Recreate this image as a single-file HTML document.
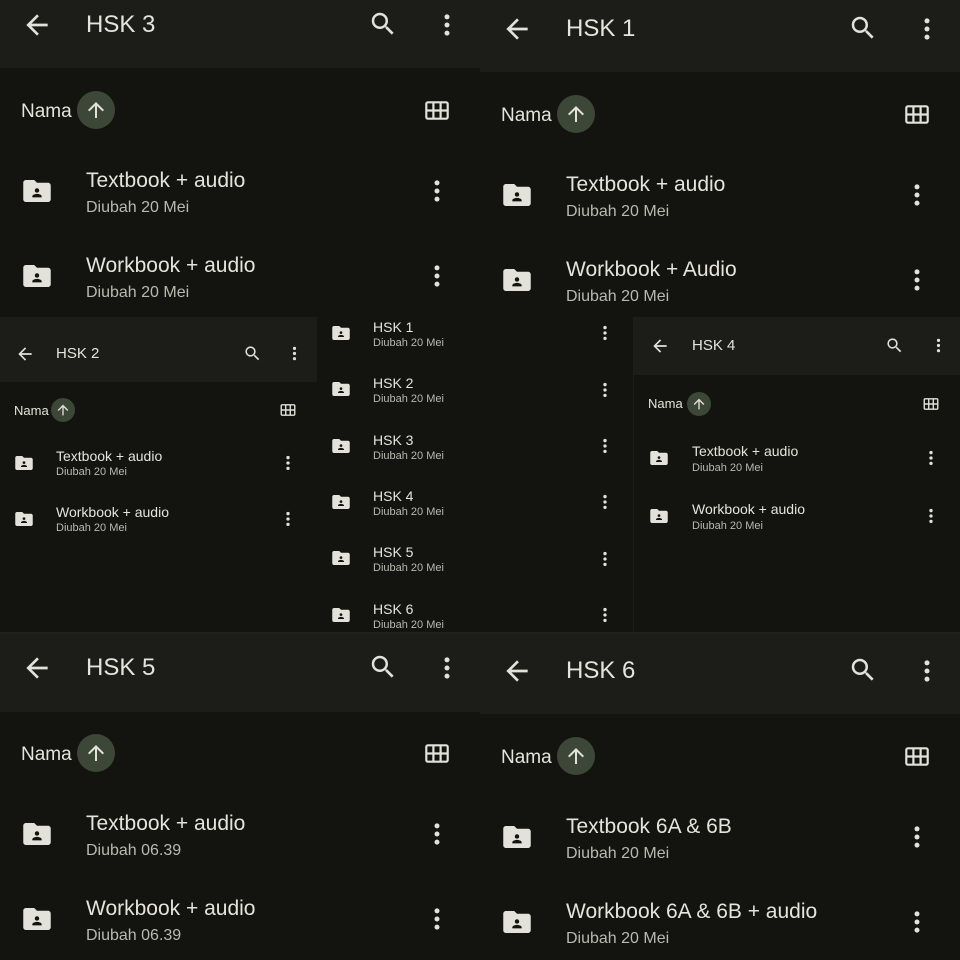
<!DOCTYPE html>
<html><head><meta charset="utf-8">
<style>
*{margin:0;padding:0;box-sizing:border-box}
body{width:960px;height:960px;background:#131410;position:relative;overflow:hidden;font-family:"Liberation Sans",sans-serif;color:#e4e4dc}
.c{position:absolute;overflow:hidden;background:#131410}
.h{position:absolute;left:0;background:#1c1d19}
.t{position:absolute;white-space:nowrap;line-height:1.2}
.s{color:#b9b9b1}
svg.i{position:absolute;fill:#e2e2da}
.o{position:absolute;border-radius:50%;background:#3d4737}
</style></head><body>
<svg width="0" height="0" style="position:absolute">
<defs>
<symbol id="back" viewBox="0 0 24 24"><path d="M20 11H7.83l5.59-5.59L12 4l-8 8 8 8 1.41-1.41L7.83 13H20v-2z"/></symbol>
<symbol id="search" viewBox="0 0 24 24"><path d="M15.5 14h-.79l-.28-.27A6.471 6.471 0 0016 9.5 6.5 6.5 0 109.5 16c1.61 0 3.09-.59 4.23-1.57l.27.28v.79l5 4.99L20.49 19l-4.99-5zm-6 0C7.01 14 5 11.99 5 9.5S7.01 5 9.5 5 14 7.01 14 9.5 11.99 14 9.5 14z"/></symbol>
<symbol id="more" viewBox="0 0 24 24"><circle cx="12" cy="5.5" r="2"/><circle cx="12" cy="12" r="2"/><circle cx="12" cy="18.5" r="2"/></symbol>
<symbol id="up" viewBox="0 0 24 24"><path d="M4 12l1.41 1.41L11 7.83V20h2V7.83l5.58 5.59L20 12l-8-8-8 8z"/></symbol>
<symbol id="folder" viewBox="2 4 20 16"><path d="M20 6h-8l-2-2H4c-1.1 0-2 .9-2 2v12c0 1.1.9 2 2 2h16c1.1 0 2-.9 2-2V8c0-1.1-.9-2-2-2zm-8 4c.9 0 1.6.7 1.6 1.6s-.7 1.6-1.6 1.6-1.6-.7-1.6-1.6.7-1.6 1.6-1.6zm3.4 6.6H8.6v-.8c0-1.1 2.3-1.7 3.4-1.7s3.4.6 3.4 1.7v.8z"/></symbol>
<symbol id="grid" viewBox="0 0 24 19"><g fill="none" stroke="#e2e2da" stroke-width="2.2"><rect x="1.3" y="1.3" width="21.4" height="16.4" rx="1.6"/><path d="M8.4 1.3v16.4M15.6 1.3v16.4M1.3 9.5h21.4"/></g></symbol>
</defs></svg>

<!-- TOP LEFT HSK 3 -->
<div class="c" style="left:0;top:0;width:480px;height:316px">
<div class="h" style="top:0;width:480px;height:68px"></div>
<svg class="i" style="left:21px;top:9px;width:32px;height:32px"><use href="#back"/></svg>
<div class="t" style="left:86px;top:11px;font-size:24px">HSK 3</div>
<svg class="i" style="left:368px;top:9px;width:30px;height:30px"><use href="#search"/></svg>
<svg class="i" style="left:432px;top:10px;width:30px;height:30px"><use href="#more"/></svg>
<div class="t" style="left:21px;top:101px;font-size:19px">Nama</div>
<div class="o" style="left:77px;top:91px;width:38px;height:38px"></div>
<svg class="i" style="left:84px;top:98px;width:24px;height:24px"><use href="#up"/></svg>
<svg class="i" style="left:425px;top:101px;width:24px;height:19px"><use href="#grid"/></svg>
<svg class="i" style="left:23px;top:180px;width:28px;height:22px"><use href="#folder"/></svg>
<div class="t" style="left:86px;top:168px;font-size:21px">Textbook + audio</div>
<div class="t s" style="left:86px;top:198px;font-size:16px">Diubah 20 Mei</div>
<svg class="i" style="left:422px;top:176px;width:30px;height:30px"><use href="#more"/></svg>
<svg class="i" style="left:23px;top:265px;width:28px;height:22px"><use href="#folder"/></svg>
<div class="t" style="left:86px;top:253px;font-size:21px">Workbook + audio</div>
<div class="t s" style="left:86px;top:283px;font-size:16px">Diubah 20 Mei</div>
<svg class="i" style="left:422px;top:261px;width:30px;height:30px"><use href="#more"/></svg>
</div>

<!-- TOP RIGHT HSK 1 -->
<div class="c" style="left:480px;top:0;width:480px;height:317px">
<div class="h" style="top:0;width:480px;height:72px"></div>
<div style="position:absolute;left:0;top:4px;width:480px;height:313px">
<svg class="i" style="left:21px;top:9px;width:32px;height:32px"><use href="#back"/></svg>
<div class="t" style="left:86px;top:11px;font-size:24px">HSK 1</div>
<svg class="i" style="left:368px;top:9px;width:30px;height:30px"><use href="#search"/></svg>
<svg class="i" style="left:432px;top:10px;width:30px;height:30px"><use href="#more"/></svg>
<div class="t" style="left:21px;top:101px;font-size:19px">Nama</div>
<div class="o" style="left:77px;top:91px;width:38px;height:38px"></div>
<svg class="i" style="left:84px;top:98px;width:24px;height:24px"><use href="#up"/></svg>
<svg class="i" style="left:425px;top:101px;width:24px;height:19px"><use href="#grid"/></svg>
<svg class="i" style="left:23px;top:180px;width:28px;height:22px"><use href="#folder"/></svg>
<div class="t" style="left:86px;top:168px;font-size:21px">Textbook + audio</div>
<div class="t s" style="left:86px;top:198px;font-size:16px">Diubah 20 Mei</div>
<svg class="i" style="left:422px;top:176px;width:30px;height:30px"><use href="#more"/></svg>
<svg class="i" style="left:23px;top:265px;width:28px;height:22px"><use href="#folder"/></svg>
<div class="t" style="left:86px;top:253px;font-size:21px">Workbook + Audio</div>
<div class="t s" style="left:86px;top:283px;font-size:16px">Diubah 20 Mei</div>
<svg class="i" style="left:422px;top:261px;width:30px;height:30px"><use href="#more"/></svg>
</div>
</div>

<!-- MID LEFT HSK 2 -->
<div class="c" style="left:0;top:317px;width:317px;height:315px">
<div class="h" style="top:0;width:317px;height:65px"></div>
<svg class="i" style="left:15px;top:27px;width:20px;height:20px"><use href="#back"/></svg>
<div class="t" style="left:56px;top:28px;font-size:15px">HSK 2</div>
<svg class="i" style="left:243px;top:27px;width:19px;height:19px"><use href="#search"/></svg>
<svg class="i" style="left:285px;top:27px;width:19px;height:19px"><use href="#more"/></svg>
<div class="t" style="left:14px;top:86px;font-size:13px">Nama</div>
<div class="o" style="left:51px;top:81px;width:24px;height:24px"></div>
<svg class="i" style="left:55px;top:85px;width:16px;height:16px"><use href="#up"/></svg>
<svg class="i" style="left:280px;top:87px;width:16px;height:12px"><use href="#grid"/></svg>
<svg class="i" style="left:15px;top:139px;width:18px;height:14px"><use href="#folder"/></svg>
<div class="t" style="left:56px;top:131px;font-size:14px">Textbook + audio</div>
<div class="t s" style="left:56px;top:149px;font-size:11px">Diubah 20 Mei</div>
<svg class="i" style="left:278px;top:136px;width:20px;height:20px"><use href="#more"/></svg>
<svg class="i" style="left:15px;top:195px;width:18px;height:14px"><use href="#folder"/></svg>
<div class="t" style="left:56px;top:187px;font-size:14px">Workbook + audio</div>
<div class="t s" style="left:56px;top:205px;font-size:11px">Diubah 20 Mei</div>
<svg class="i" style="left:278px;top:192px;width:20px;height:20px"><use href="#more"/></svg>
</div>

<!-- MID LIST -->
<div class="c" style="left:317px;top:317px;width:316px;height:315px">
<svg class="i" style="left:15px;top:9px;width:18px;height:14px"><use href="#folder"/></svg>
<div class="t" style="left:56px;top:2px;font-size:14px">HSK 1</div>
<div class="t s" style="left:56px;top:20px;font-size:11px">Diubah 20 Mei</div>
<svg class="i" style="left:278px;top:6px;width:20px;height:20px"><use href="#more"/></svg>
<svg class="i" style="left:15px;top:65px;width:18px;height:14px"><use href="#folder"/></svg>
<div class="t" style="left:56px;top:58px;font-size:14px">HSK 2</div>
<div class="t s" style="left:56px;top:76px;font-size:11px">Diubah 20 Mei</div>
<svg class="i" style="left:278px;top:63px;width:20px;height:20px"><use href="#more"/></svg>
<svg class="i" style="left:15px;top:122px;width:18px;height:14px"><use href="#folder"/></svg>
<div class="t" style="left:56px;top:115px;font-size:14px">HSK 3</div>
<div class="t s" style="left:56px;top:133px;font-size:11px">Diubah 20 Mei</div>
<svg class="i" style="left:278px;top:119px;width:20px;height:20px"><use href="#more"/></svg>
<svg class="i" style="left:15px;top:178px;width:18px;height:14px"><use href="#folder"/></svg>
<div class="t" style="left:56px;top:171px;font-size:14px">HSK 4</div>
<div class="t s" style="left:56px;top:189px;font-size:11px">Diubah 20 Mei</div>
<svg class="i" style="left:278px;top:175px;width:20px;height:20px"><use href="#more"/></svg>
<svg class="i" style="left:15px;top:234px;width:18px;height:14px"><use href="#folder"/></svg>
<div class="t" style="left:56px;top:227px;font-size:14px">HSK 5</div>
<div class="t s" style="left:56px;top:245px;font-size:11px">Diubah 20 Mei</div>
<svg class="i" style="left:278px;top:232px;width:20px;height:20px"><use href="#more"/></svg>
<svg class="i" style="left:15px;top:291px;width:18px;height:14px"><use href="#folder"/></svg>
<div class="t" style="left:56px;top:284px;font-size:14px">HSK 6</div>
<div class="t s" style="left:56px;top:302px;font-size:11px">Diubah 20 Mei</div>
<svg class="i" style="left:278px;top:288px;width:20px;height:20px"><use href="#more"/></svg>
</div>

<!-- MID RIGHT HSK 4 -->
<div class="c" style="left:633px;top:317px;width:327px;height:315px;border-left:1px solid #1c1d19">
<div class="h" style="top:0;width:327px;height:58px"></div>
<svg class="i" style="left:16px;top:19px;width:20px;height:20px"><use href="#back"/></svg>
<div class="t" style="left:58px;top:20px;font-size:15px">HSK 4</div>
<svg class="i" style="left:251px;top:19px;width:19px;height:19px"><use href="#search"/></svg>
<svg class="i" style="left:295px;top:19px;width:19px;height:19px"><use href="#more"/></svg>
<div class="t" style="left:14px;top:79px;font-size:13px">Nama</div>
<div class="o" style="left:53px;top:75px;width:24px;height:24px"></div>
<svg class="i" style="left:57px;top:79px;width:16px;height:16px"><use href="#up"/></svg>
<svg class="i" style="left:289px;top:81px;width:16px;height:12px"><use href="#grid"/></svg>
<svg class="i" style="left:16px;top:134px;width:18px;height:14px"><use href="#folder"/></svg>
<div class="t" style="left:58px;top:126px;font-size:14px">Textbook + audio</div>
<div class="t s" style="left:58px;top:145px;font-size:11px">Diubah 20 Mei</div>
<svg class="i" style="left:287px;top:131px;width:20px;height:20px"><use href="#more"/></svg>
<svg class="i" style="left:16px;top:192px;width:18px;height:14px"><use href="#folder"/></svg>
<div class="t" style="left:58px;top:184px;font-size:14px">Workbook + audio</div>
<div class="t s" style="left:58px;top:203px;font-size:11px">Diubah 20 Mei</div>
<svg class="i" style="left:287px;top:189px;width:20px;height:20px"><use href="#more"/></svg>
</div>

<!-- BOTTOM LEFT HSK 5 -->
<div class="c" style="left:0;top:632px;width:480px;height:328px;border-top:2px solid #1f201c">
<div class="h" style="top:0;width:480px;height:78px"></div>
<div style="position:absolute;left:0;top:9px;width:480px;height:319px">
<svg class="i" style="left:21px;top:9px;width:32px;height:32px"><use href="#back"/></svg>
<div class="t" style="left:86px;top:11px;font-size:24px">HSK 5</div>
<svg class="i" style="left:368px;top:9px;width:30px;height:30px"><use href="#search"/></svg>
<svg class="i" style="left:432px;top:10px;width:30px;height:30px"><use href="#more"/></svg>
<div class="t" style="left:21px;top:101px;font-size:19px">Nama</div>
<div class="o" style="left:77px;top:91px;width:38px;height:38px"></div>
<svg class="i" style="left:84px;top:98px;width:24px;height:24px"><use href="#up"/></svg>
<svg class="i" style="left:425px;top:101px;width:24px;height:19px"><use href="#grid"/></svg>
<svg class="i" style="left:23px;top:180px;width:28px;height:22px"><use href="#folder"/></svg>
<div class="t" style="left:86px;top:168px;font-size:21px">Textbook + audio</div>
<div class="t s" style="left:86px;top:198px;font-size:16px">Diubah 06.39</div>
<svg class="i" style="left:422px;top:176px;width:30px;height:30px"><use href="#more"/></svg>
<svg class="i" style="left:23px;top:265px;width:28px;height:22px"><use href="#folder"/></svg>
<div class="t" style="left:86px;top:253px;font-size:21px">Workbook + audio</div>
<div class="t s" style="left:86px;top:283px;font-size:16px">Diubah 06.39</div>
<svg class="i" style="left:422px;top:261px;width:30px;height:30px"><use href="#more"/></svg>
</div>
</div>

<!-- BOTTOM RIGHT HSK 6 -->
<div class="c" style="left:480px;top:632px;width:480px;height:328px;border-top:2px solid #1f201c">
<div class="h" style="top:0;width:480px;height:80px"></div>
<div style="position:absolute;left:0;top:12px;width:480px;height:316px">
<svg class="i" style="left:21px;top:9px;width:32px;height:32px"><use href="#back"/></svg>
<div class="t" style="left:86px;top:11px;font-size:24px">HSK 6</div>
<svg class="i" style="left:368px;top:9px;width:30px;height:30px"><use href="#search"/></svg>
<svg class="i" style="left:432px;top:10px;width:30px;height:30px"><use href="#more"/></svg>
<div class="t" style="left:21px;top:101px;font-size:19px">Nama</div>
<div class="o" style="left:77px;top:91px;width:38px;height:38px"></div>
<svg class="i" style="left:84px;top:98px;width:24px;height:24px"><use href="#up"/></svg>
<svg class="i" style="left:425px;top:101px;width:24px;height:19px"><use href="#grid"/></svg>
<svg class="i" style="left:23px;top:180px;width:28px;height:22px"><use href="#folder"/></svg>
<div class="t" style="left:86px;top:168px;font-size:21px">Textbook 6A &amp; 6B</div>
<div class="t s" style="left:86px;top:198px;font-size:16px">Diubah 20 Mei</div>
<svg class="i" style="left:422px;top:176px;width:30px;height:30px"><use href="#more"/></svg>
<svg class="i" style="left:23px;top:265px;width:28px;height:22px"><use href="#folder"/></svg>
<div class="t" style="left:86px;top:253px;font-size:21px">Workbook 6A &amp; 6B + audio</div>
<div class="t s" style="left:86px;top:283px;font-size:16px">Diubah 20 Mei</div>
<svg class="i" style="left:422px;top:261px;width:30px;height:30px"><use href="#more"/></svg>
</div>
</div>
</body></html>
